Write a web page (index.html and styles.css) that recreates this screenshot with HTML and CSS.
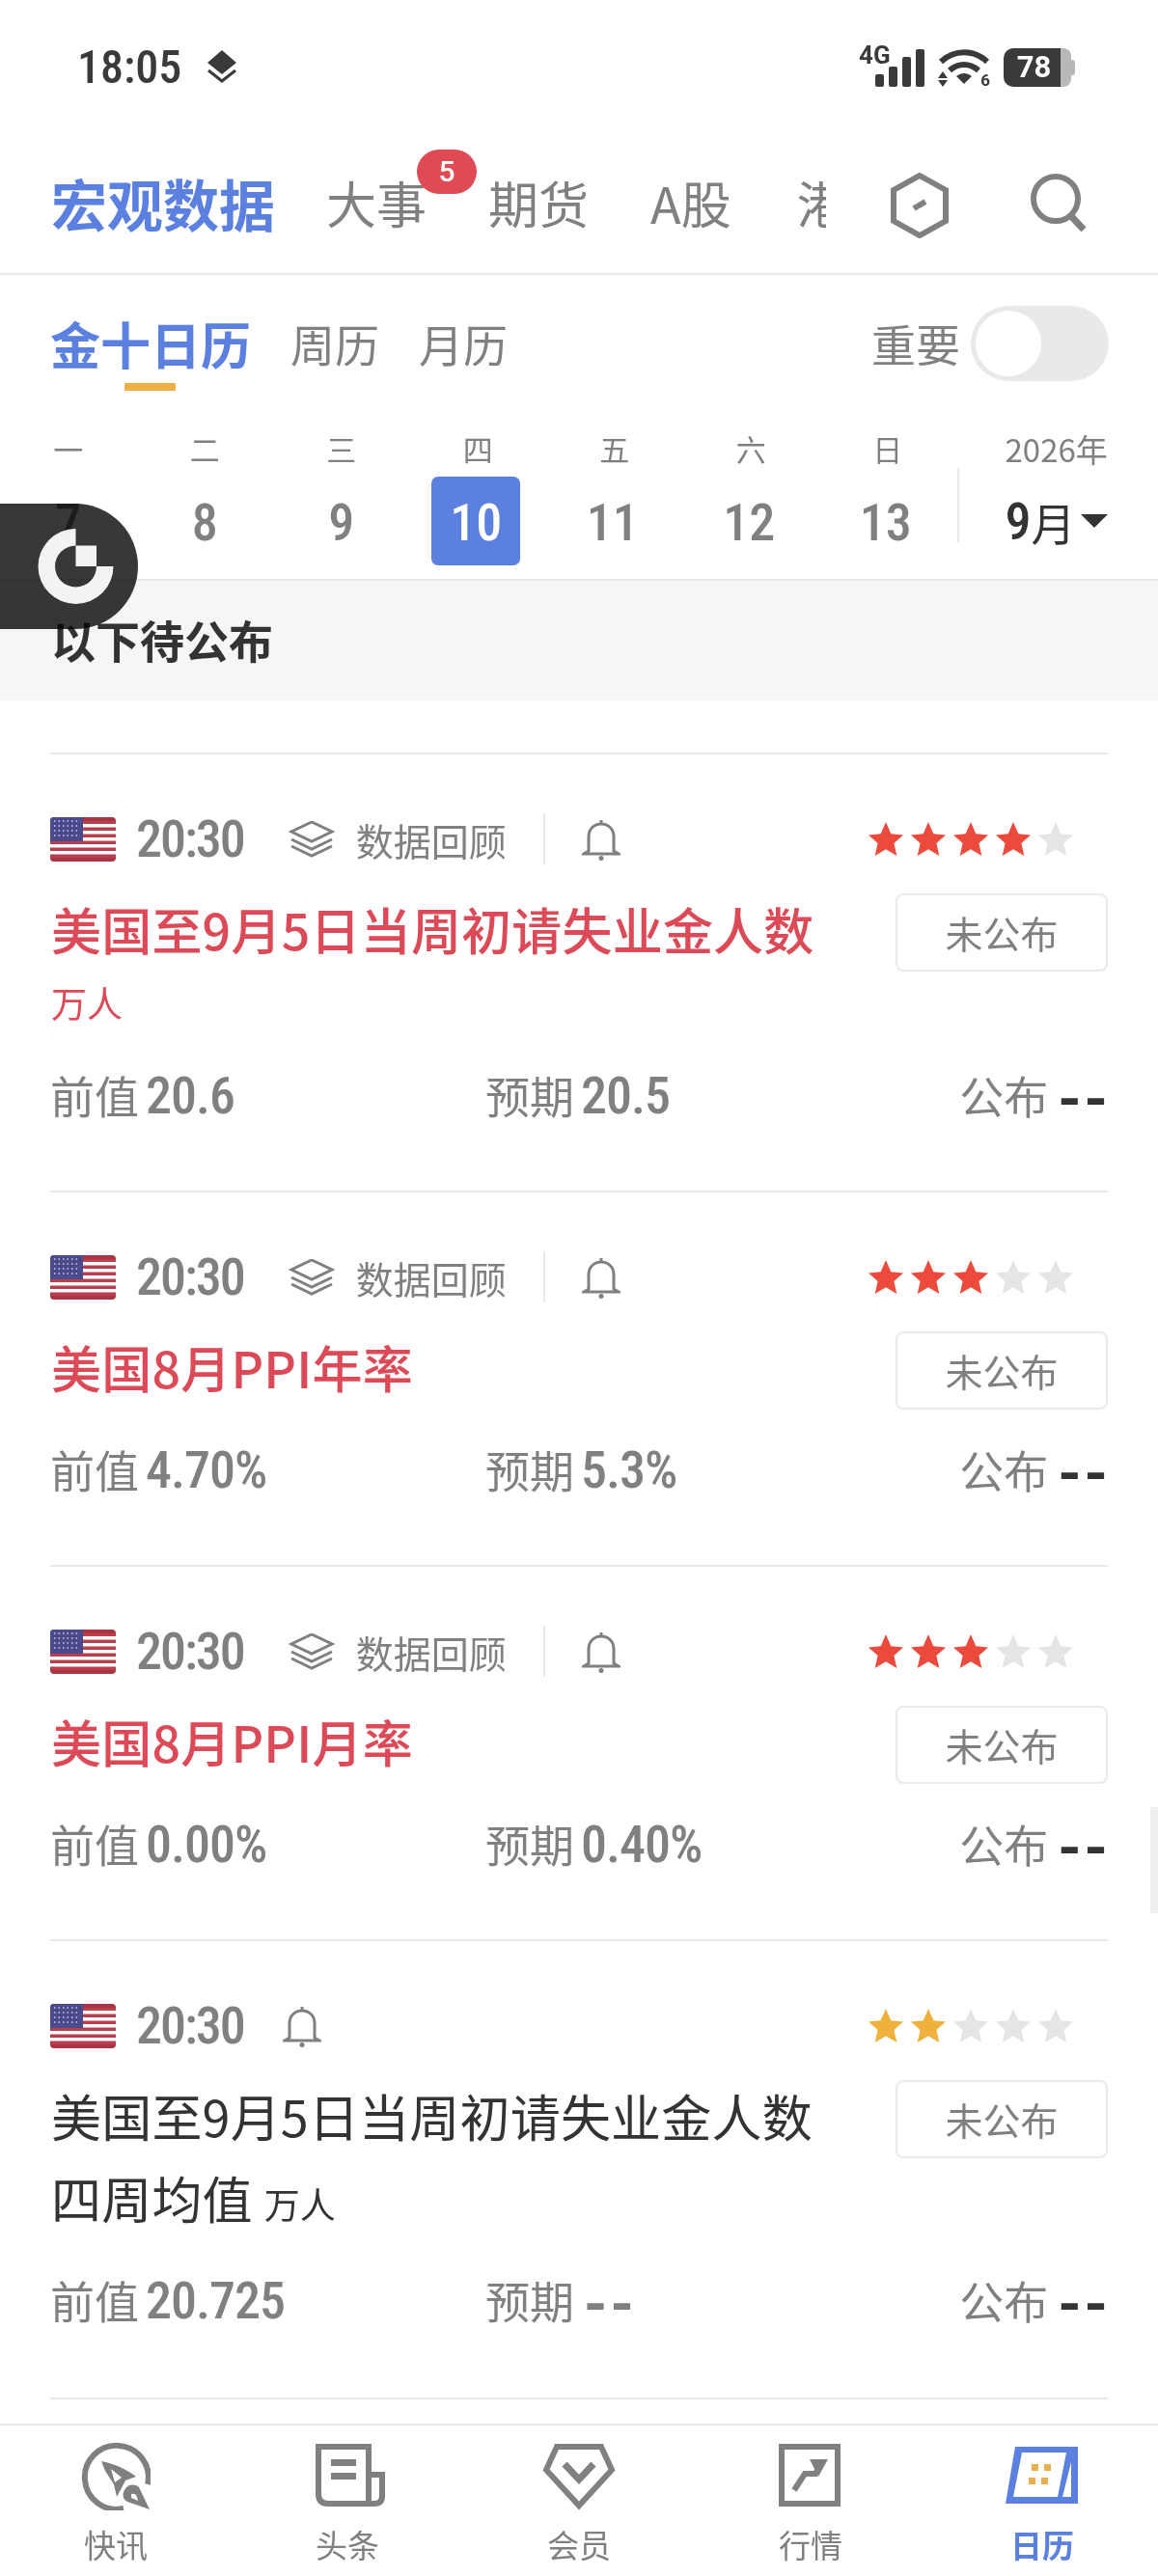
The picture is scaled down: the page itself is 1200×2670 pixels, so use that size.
FILE: index.html
```html
<!DOCTYPE html>
<html lang="zh-CN">
<head>
  <meta charset="UTF-8">
  <meta name="viewport" content="width=device-width, initial-scale=1.0">
  <title>金十日历</title>
  <link rel="stylesheet" href="styles.css">
</head>
<body>
  <svg class="defs" width="0" height="0">
    <symbol id="star" viewBox="0 0 36 36"><path d="M18 0l5.300 12.200 12.700 1.200-9.600 8.700 2.900 13-11.300-6.900-11.300 6.900 2.900-13L0 13.400l12.700-1.200z"/></symbol>
    <symbol id="bell" viewBox="0 0 40 44"><path d="M20 2v4M7 34V19C7 11 13 6 20 6s13 5 13 13v15l5 3H2l5-3z" fill="none" stroke="currentColor" stroke-width="3"/><circle cx="20" cy="41.500" r="2.500" fill="currentColor"/></symbol>
    <symbol id="stack" viewBox="0 0 48 38"><path d="M24 2l21 10-21 10L3 12z M3 20l21 10 21-10 M3 27l21 10 21-10" fill="none" stroke="currentColor" stroke-width="3" transform="translate(0 -1)"/></symbol>
    <symbol id="flag" viewBox="0 0 68 46">
      <rect width="68" height="46" rx="4" fill="#fff"/>
      <path d="M0 3.500h68v3.500H0zM0 10.500h68v3.500H0zM0 17.500h68v3.500H0zM0 24.500h68v3.500H0zM0 31.500h68v3.500H0zM0 38.500h68v3.500H0z" fill="#b8404e"/>
      <path d="M4 0h60a4 4 0 0 1 4 4H0a4 4 0 0 1 4-4zM0 42h68a4 4 0 0 1-4 4H4a4 4 0 0 1-4-4z" fill="#a93444"/>
      <path d="M4 0h30v25H0V4a4 4 0 0 1 4-4z" fill="#4a4a8c"/>
      <path d="M4 4h27M4 9h27M4 14h27M4 19h27" stroke="#c9c9e4" stroke-width="1.500" stroke-dasharray="1.500 3" fill="none"/>
    </symbol>
  </svg>

  <div class="page">
    <div class="status-bar">
      <span class="clock">18:05</span>
      <svg class="status-layers" width="30" height="34" viewBox="0 0 30 34"><path d="M15 0l15 13-15 12L0 13z" fill="#3a3a3a"/><path d="M1 21l14 11 14-11" fill="none" stroke="#3a3a3a" stroke-width="3"/></svg>
      <div class="status-right">
        <div class="signal">
          <span class="signal-label">4G</span>
          <i class="bar bar-1"></i><i class="bar bar-2"></i><i class="bar bar-3"></i><i class="bar bar-4"></i>
        </div>
        <div class="wifi">
          <svg width="54" height="40" viewBox="0 0 54 40">
            <path d="M3 14C17 1 37 1 51 14" fill="none" stroke="#3a3a3a" stroke-width="6"/>
            <path d="M12 23c9-8 21-8 30 0" fill="none" stroke="#3a3a3a" stroke-width="6"/>
            <path d="M19 29c5-4 11-4 16 0l-8 8z" fill="#3a3a3a"/>
            <path d="M5 24l5 7H0zM5 40l5-7H0z" fill="#3a3a3a"/>
          </svg>
          <span class="wifi-label">6</span>
        </div>
        <div class="battery"><span class="battery-level">78</span><i class="battery-rest"></i></div>
      </div>
    </div>

    <header class="top-nav">
      <h1 class="nav-title">宏观数据</h1>
      <div class="nav-tabs">
        <span class="nav-tab">大事<b class="badge">5</b></span>
        <span class="nav-tab">期货</span>
        <span class="nav-tab">A股</span>
        <span class="nav-tab">港股</span>
      </div>
      <svg class="nav-hex" width="60" height="68" viewBox="0 0 60 68"><path d="M30 3l27 15v32L30 65 3 50V18z" fill="none" stroke="#808080" stroke-width="6"/><path d="M24 37l12-7" stroke="#808080" stroke-width="6"/></svg>
      <svg class="nav-search" width="60" height="60" viewBox="0 0 60 60"><circle cx="28" cy="26" r="23" fill="none" stroke="#808080" stroke-width="6"/><path d="M43 43l14 15" stroke="#808080" stroke-width="7"/></svg>
    </header>

    <div class="sub-nav">
      <span class="sub-tab active">金十日历</span>
      <span class="sub-tab">周历</span>
      <span class="sub-tab">月历</span>
      <span class="important">重要</span>
      <span class="toggle"><i class="knob"></i></span>
    </div>

    <div class="week">
      <div class="day"><span class="weekday">一</span><span class="date num">7</span></div>
      <div class="day"><span class="weekday">二</span><span class="date num">8</span></div>
      <div class="day"><span class="weekday">三</span><span class="date num">9</span></div>
      <div class="day"><span class="weekday">四</span><span class="date num today">10</span></div>
      <div class="day"><span class="weekday">五</span><span class="date num">11</span></div>
      <div class="day"><span class="weekday">六</span><span class="date num">12</span></div>
      <div class="day"><span class="weekday">日</span><span class="date num">13</span></div>
      <div class="month">
        <span class="year">2026年</span>
        <span class="month-now"><span class="num">9</span>月<i class="caret"></i></span>
      </div>
    </div>

    <div class="band">以下待公布</div>

    <div class="list">
      <article class="card">
        <div class="card-head">
          <svg class="flag"><use href="#flag"/></svg>
          <span class="time num">20:30</span>
          <svg class="stack"><use href="#stack"/></svg>
          <span class="review">数据回顾</span>
          <i class="head-line"></i>
          <svg class="bell"><use href="#bell"/></svg>
          <div class="stars">
            <svg class="red"><use href="#star"/></svg><svg class="red"><use href="#star"/></svg><svg class="red"><use href="#star"/></svg><svg class="red"><use href="#star"/></svg><svg><use href="#star"/></svg>
          </div>
        </div>
        <div class="card-body">
          <div class="card-text red-text">
            <div class="card-title">美国至9月5日当周初请失业金人数</div>
            <div class="unit-line">万人</div>
          </div>
          <span class="state">未公布</span>
        </div>
        <div class="values">
          <span>前值<b class="num">20.6</b></span>
          <span>预期<b class="num">20.5</b></span>
          <span>公布<b class="num dash">--</b></span>
        </div>
      </article>

      <article class="card">
        <div class="card-head">
          <svg class="flag"><use href="#flag"/></svg>
          <span class="time num">20:30</span>
          <svg class="stack"><use href="#stack"/></svg>
          <span class="review">数据回顾</span>
          <i class="head-line"></i>
          <svg class="bell"><use href="#bell"/></svg>
          <div class="stars">
            <svg class="red"><use href="#star"/></svg><svg class="red"><use href="#star"/></svg><svg class="red"><use href="#star"/></svg><svg><use href="#star"/></svg><svg><use href="#star"/></svg>
          </div>
        </div>
        <div class="card-body">
          <div class="card-text red-text">
            <div class="card-title">美国8月PPI年率</div>
          </div>
          <span class="state">未公布</span>
        </div>
        <div class="values">
          <span>前值<b class="num">4.70%</b></span>
          <span>预期<b class="num">5.3%</b></span>
          <span>公布<b class="num dash">--</b></span>
        </div>
      </article>

      <article class="card">
        <div class="card-head">
          <svg class="flag"><use href="#flag"/></svg>
          <span class="time num">20:30</span>
          <svg class="stack"><use href="#stack"/></svg>
          <span class="review">数据回顾</span>
          <i class="head-line"></i>
          <svg class="bell"><use href="#bell"/></svg>
          <div class="stars">
            <svg class="red"><use href="#star"/></svg><svg class="red"><use href="#star"/></svg><svg class="red"><use href="#star"/></svg><svg><use href="#star"/></svg><svg><use href="#star"/></svg>
          </div>
        </div>
        <div class="card-body">
          <div class="card-text red-text">
            <div class="card-title">美国8月PPI月率</div>
          </div>
          <span class="state">未公布</span>
        </div>
        <div class="values">
          <span>前值<b class="num">0.00%</b></span>
          <span>预期<b class="num">0.40%</b></span>
          <span>公布<b class="num dash">--</b></span>
        </div>
      </article>

      <article class="card">
        <div class="card-head">
          <svg class="flag"><use href="#flag"/></svg>
          <span class="time num">20:30</span>
          <svg class="bell bell-near"><use href="#bell"/></svg>
          <div class="stars">
            <svg class="amber"><use href="#star"/></svg><svg class="amber"><use href="#star"/></svg><svg><use href="#star"/></svg><svg><use href="#star"/></svg><svg><use href="#star"/></svg>
          </div>
        </div>
        <div class="card-body">
          <div class="card-text">
            <div class="card-title">美国至9月5日当周初请失业金人数<br>四周均值 <small>万人</small></div>
          </div>
          <span class="state">未公布</span>
        </div>
        <div class="values">
          <span>前值<b class="num">20.725</b></span>
          <span>预期<b class="num dash dash-grey">--</b></span>
          <span>公布<b class="num dash">--</b></span>
        </div>
      </article>
    </div>

    <nav class="tab-bar">
      <div class="tab">
        <svg width="72" height="72" viewBox="0 0 72 72">
          <path d="M69 45A33 33 0 1 0 44 70" fill="none" stroke="#808080" stroke-width="6"/>
          <path fill-rule="evenodd" fill="#808080" d="M21 21c15 3 27 9 36 16l-11 4-9 17-3-13-9-14zM31 29l4 14 7-5z"/>
          <path fill-rule="evenodd" fill="#808080" d="M71 71L60 48c-5-4-12-3-15 3-3 5-1 10 3 12zM52 55c3-1 5 0 6 3l1 4-7-3z"/>
        </svg>
        <span>快讯</span>
      </div>
      <div class="tab tab-news">
        <svg width="72" height="72" viewBox="0 0 72 72">
          <path d="M3 6h52v59H13q-10 0-10-10zM55 35h14v22q0 8-8 8h-6" fill="none" stroke="#808080" stroke-width="6"/>
          <path d="M16 19h26v7H16zM16 33h26v7H16z" fill="#808080"/>
        </svg>
        <span>头条</span>
      </div>
      <div class="tab">
        <svg width="78" height="72" viewBox="0 0 78 72">
          <path d="M16 6h46l11 24-34 37L5 30z" fill="none" stroke="#808080" stroke-width="6"/>
          <path d="M24 24l15 16 15-16" fill="none" stroke="#808080" stroke-width="7"/>
        </svg>
        <span>会员</span>
      </div>
      <div class="tab">
        <svg width="66" height="72" viewBox="0 0 66 72">
          <rect x="3" y="6" width="58" height="59" fill="none" stroke="#808080" stroke-width="6"/>
          <path d="M16 51l11-17h11l8-14" fill="none" stroke="#808080" stroke-width="6"/>
          <path d="M32 19h19l-10 18z" fill="#808080"/>
        </svg>
        <span>行情</span>
      </div>
      <div class="tab tab-active">
        <svg width="76" height="72" viewBox="0 0 76 72">
          <path d="M10 6h65v59H0z" fill="#5b80e0"/>
          <path d="M17 12h46l-9 46H8z" fill="#fff"/>
          <path d="M68 22v36h-9z" fill="#fff"/>
          <path d="M27 24h7v7h-7zM40 24h7v7h-7zM24 38h7v7h-7zM37 38h7v7h-7z" fill="#e8b04f"/>
        </svg>
        <span>日历</span>
      </div>
    </nav>

    <div class="float-btn"></div>
    <svg class="float-logo" width="80" height="80" viewBox="0 0 80 80"><path fill="#fff" d="M39.500 1A39 39 0 1 0 78.500 40H61A21.500 21.500 0 1 1 39.500 18.500z"/><path fill="#fff" d="M39.500 18.500H61V40H39.500z"/></svg>
    <i class="scroll-thumb"></i>
  </div>
</body>
</html>
```
FILE: styles.css
```css
* {
  box-sizing: border-box;
}

body {
  margin: 0;
  background: #fff;
  color: #333;
  font-family: "Noto Sans CJK SC", "Noto Sans", sans-serif;
}

i {
  display: block;
}

.defs {
  position: absolute;
}

.page {
  position: relative;
  display: flex;
  flex-direction: column;
  width: 1200px;
  height: 2670px;
  overflow: hidden;
}

.num {
  font-family: Roboto, sans-serif;
  font-stretch: 75%;
  font-weight: 500;
}

/* status bar */
.status-bar {
  display: flex;
  align-items: center;
  height: 136px;
  padding: 2px 90px 0 80px;
}

.clock {
  font-family: Roboto, sans-serif;
  font-size: 48px;
  font-stretch: 85%;
  font-weight: 500;
  color: #3a3a3a;
}

.status-layers {
  margin-left: 27px;
}

.status-right {
  display: flex;
  align-items: flex-end;
  gap: 14px;
  margin-left: auto;
  margin-top: -3px;
  height: 44px;
}

.signal {
  position: relative;
  display: flex;
  align-items: flex-end;
  gap: 5px;
  padding-left: 17px;
  height: 40px;
}

.signal-label {
  position: absolute;
  left: 0;
  top: -5px;
  font-family: Roboto, sans-serif;
  font-size: 26px;
  font-weight: 700;
  line-height: 24px;
  color: #3a3a3a;
}

.bar {
  width: 9px;
  border-radius: 2px;
  background: #3a3a3a;
}

.bar-1 { height: 13px; }
.bar-2 { height: 21px; }
.bar-3 { height: 31px; }
.bar-4 { height: 39px; }

.wifi {
  position: relative;
  width: 54px;
  height: 40px;
}

.wifi-label {
  position: absolute;
  right: 0;
  bottom: 0;
  font-family: Roboto, sans-serif;
  font-size: 17px;
  font-weight: 700;
  line-height: 14px;
  color: #3a3a3a;
}

.battery {
  display: flex;
  height: 40px;
}

.battery-level {
  width: 59px;
  padding-left: 4px;
  border-radius: 10px 0 0 10px;
  background: #3a3a3a;
  color: #fff;
  font-family: Roboto, sans-serif;
  font-size: 31px;
  font-weight: 700;
  line-height: 40px;
  text-align: center;
}

.battery-rest {
  position: relative;
  width: 11px;
  border-radius: 0 8px 8px 0;
  background: #b8b8b8;
}

.battery-rest::after {
  content: "";
  position: absolute;
  left: 11px;
  top: 12px;
  width: 4px;
  height: 16px;
  border-radius: 0 3px 3px 0;
  background: #b8b8b8;
}

/* top nav */
.top-nav {
  display: flex;
  align-items: center;
  flex: none;
  height: 149px;
  padding: 0 0 0 53px;
  border-bottom: 2px solid #e9e9e9;
}

.nav-title {
  margin: 0 53px 0 0;
  font-size: 58px;
  font-weight: 700;
  color: #5b80e0;
}

.nav-tabs {
  display: flex;
  gap: 64px;
  width: 518px;
  overflow: hidden;
  padding-top: 19px;
  margin-top: -19px;
}

.nav-tab {
  position: relative;
  flex: none;
  font-size: 52px;
  line-height: 72px;
  color: #808080;
}

.nav-tab:last-child {
  margin-left: 4px;
}

.badge {
  position: absolute;
  left: 94px;
  top: -19px;
  width: 62px;
  height: 46px;
  border-radius: 23px;
  background: #e04a55;
  color: #fff;
  font-family: Roboto, sans-serif;
  font-size: 30px;
  font-weight: 500;
  line-height: 46px;
  text-align: center;
}

.nav-hex {
  margin: 6px 0 0 67px;
}

.nav-search {
  margin: 0 0 0 83px;
}

/* sub nav */
.sub-nav {
  display: flex;
  align-items: center;
  gap: 41px;
  flex: none;
  height: 146px;
  padding: 0 51px 6px 52px;
}

.sub-tab {
  position: relative;
  font-size: 46px;
  color: #808080;
}

.sub-tab.active {
  font-size: 52px;
  font-weight: 700;
  color: #5b80e0;
}

.sub-tab.active::after {
  content: "";
  position: absolute;
  left: 77px;
  bottom: -12px;
  width: 53px;
  height: 8px;
  border-radius: 1px;
  background: #eeb044;
}

.important {
  margin-left: auto;
  margin-right: -30px;
  font-size: 46px;
  color: #808080;
}

.toggle {
  display: block;
  width: 143px;
  height: 78px;
  margin-top: 2px;
  padding: 5px;
  border-radius: 39px;
  background: #e9e9e9;
}

.knob {
  width: 68px;
  height: 68px;
  border-radius: 50%;
  background: #fff;
}

/* week row */
.week {
  display: flex;
  flex: none;
  height: 171px;
  border-bottom: 2px solid #e9e9e9;
}

.day {
  display: flex;
  flex-direction: column;
  align-items: center;
  width: 141.5px;
  padding-top: 14px;
}

.weekday {
  font-size: 31px;
  line-height: 40px;
  color: #808080;
}

.date {
  width: 92px;
  height: 92px;
  margin-top: 9px;
  border-radius: 7px;
  font-size: 54px;
  line-height: 96px;
  text-align: center;
  color: #808080;
}

.day:nth-child(n+4) .date {
  margin-left: -4px;
}

.date.today {
  background: #5b80e0;
  color: #fff;
}

.month {
  position: relative;
  flex: 1;
  padding: 14px 0 0 51px;
}

.month::before {
  content: "";
  position: absolute;
  left: 1px;
  top: 54px;
  width: 2px;
  height: 77px;
  background: #e9e9e9;
}

.year {
  display: block;
  font-size: 33px;
  line-height: 40px;
  color: #808080;
  white-space: nowrap;
}

.month-now {
  display: flex;
  align-items: center;
  margin-top: 9px;
  height: 92px;
  font-size: 46px;
  color: #333;
}

.month-now .num {
  font-size: 54px;
}

.caret {
  width: 0;
  height: 0;
  margin-left: 5px;
  border-left: 14px solid transparent;
  border-right: 14px solid transparent;
  border-top: 14px solid #333;
}

.band {
  flex: none;
  height: 124px;
  padding: 27px 0 0 53px;
  background: #f6f6f6;
  font-size: 46px;
  font-weight: 700;
  line-height: 66px;
  color: #333;
}

/* cards */
.list {
  flex: 1;
  padding: 54px 52px 0;
}

.card {
  border-top: 2px solid #e9e9e9;
  padding: 61px 0 72px;
}

.card:last-child {
  padding-bottom: 74px;
  border-bottom: 2px solid #e9e9e9;
}

.card:last-child .values {
  margin-top: 35px;
}

.card-head {
  display: flex;
  align-items: center;
  height: 53px;
}

.flag {
  flex: none;
  width: 68px;
  height: 46px;
}

.time {
  margin-left: 21px;
  font-size: 54px;
  letter-spacing: -2px;
  color: #808080;
}

.stack {
  width: 48px;
  height: 38px;
  margin-left: 46px;
  color: #808080;
}

.review {
  margin-left: 22px;
  font-size: 39px;
  color: #808080;
}

.head-line {
  width: 2px;
  height: 53px;
  margin-left: 38px;
  background: #e9e9e9;
}

.bell {
  width: 40px;
  height: 44px;
  margin-left: 38px;
  color: #808080;
}

.bell-near {
  margin-left: 40px;
}

.stars {
  display: flex;
  gap: 8px;
  margin-left: auto;
  margin-right: 36px;
  fill: #e5e5e5;
}

.stars svg {
  width: 36px;
  height: 36px;
}

.stars .red {
  fill: #ec4a3c;
}

.stars .amber {
  fill: #f0b03c;
}

.card-body {
  display: flex;
  justify-content: space-between;
  align-items: flex-start;
  margin-top: 24px;
}

.card-text {
  padding-left: 1px;
}

.card-title {
  font-size: 52px;
  letter-spacing: 0.2px;
  line-height: 85px;
  color: #333;
}

.card-title small {
  font-size: 37px;
  line-height: 1;
}

.red-text .card-title {
  font-weight: 500;
}

.red-text .card-title,
.red-text .unit-line {
  color: #dc4a58;
}

.unit-line {
  font-size: 37px;
  line-height: 68px;
}

.state {
  flex: none;
  width: 220px;
  height: 81px;
  margin-top: 6px;
  border: 2px solid #eaeaea;
  border-radius: 8px;
  font-size: 39px;
  line-height: 77px;
  text-align: center;
  color: #808080;
}

.values {
  display: grid;
  grid-template-columns: 451px 1fr auto;
  height: 56px;
  margin-top: 33px;
  font-size: 46px;
  line-height: 56px;
  white-space: nowrap;
  color: #808080;
}

.values b {
  margin-left: 7px;
  font-size: 54px;
  letter-spacing: -1px;
  line-height: 40px;
}

.values .dash {
  margin-left: 10px;
  margin-right: -3px;
  font-size: 62px;
  font-stretch: 100%;
  font-weight: 700;
  letter-spacing: 3px;
  vertical-align: -6px;
  color: #333;
}

.values .dash-grey {
  color: #808080;
}

/* bottom tabs */
.tab-bar {
  display: grid;
  grid-template-columns: repeat(5, 240px);
  flex: none;
  height: 158px;
  border-top: 2px solid #e9e9e9;
}

.tab {
  display: flex;
  flex-direction: column;
  align-items: center;
  padding-top: 16px;
  font-size: 33px;
  line-height: 46px;
  color: #808080;
}

.tab svg {
  height: 72px;
  margin-bottom: 12px;
}

.tab-news svg {
  margin-left: 6px;
}

.tab-active {
  font-weight: 700;
  color: #5b80e0;
}

/* floating button sits over the week row */
.float-btn {
  position: absolute;
  left: 0;
  top: 522px;
  width: 143px;
  height: 130px;
  border-radius: 0 65px 65px 0;
  background: #383838;
  mix-blend-mode: multiply;
}

.float-logo {
  position: absolute;
  left: 39px;
  top: 547px;
  opacity: 0.94;
}

.scroll-thumb {
  position: absolute;
  right: 0;
  top: 1873px;
  width: 8px;
  height: 110px;
  background: #efefef;
}
```
